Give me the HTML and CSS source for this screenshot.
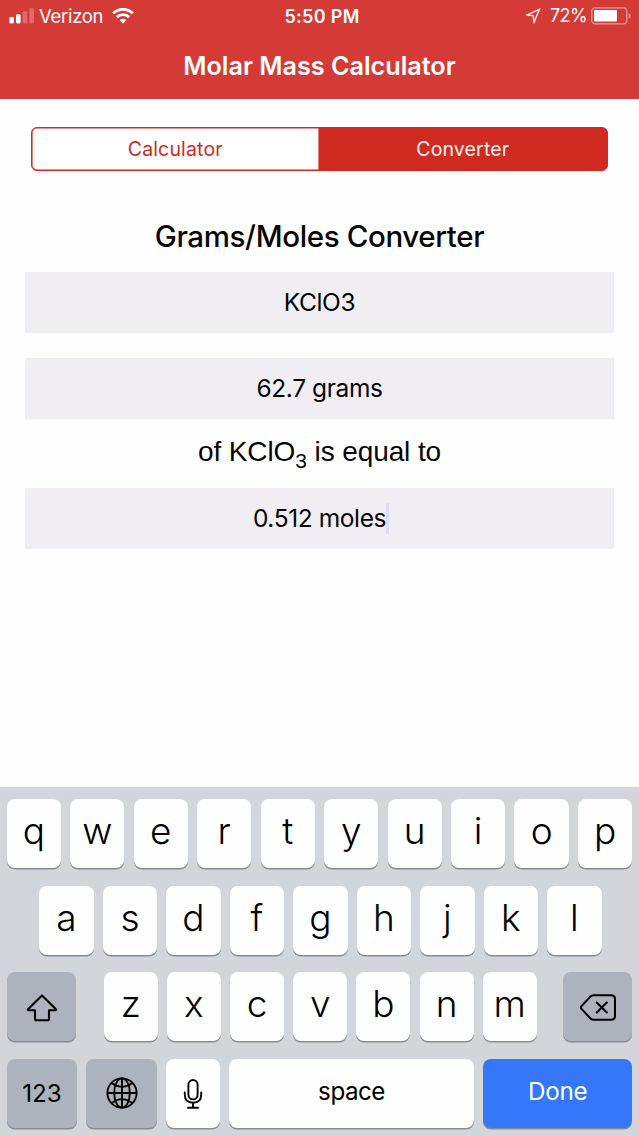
FILE: index.html
```html
<!DOCTYPE html>
<html lang="en">
<head>
    <meta charset="UTF-8"/>
    <meta content="width=device-width, initial-scale=1" name="viewport"/>
    <title>Molar Mass Calculator</title>
    <link rel="stylesheet" href="styles.css">
</head>
<body>

<header class="header">
    <div class="status-bar">
        <div class="status-left">
            <svg class="signal" width="26" height="16" viewBox="0 0 26 16" fill="#fff">
                <rect x="0.3" y="9" width="4.6" height="6.4" rx="1.4"/>
                <rect x="7" y="6.2" width="4.6" height="9.2" rx="1.4"/>
                <rect x="13.7" y="3.3" width="4.6" height="12.1" rx="1.4" opacity="0.25"/>
                <rect x="20.4" y="0.3" width="4.6" height="15.1" rx="1.4" opacity="0.25"/>
            </svg>
            <span class="carrier">Verizon</span>
            <svg class="wifi" width="22" height="16" viewBox="0 0 22 16" fill="none" stroke="#fff" stroke-width="2.9">
                <path d="M1.2 5.3a13.9 13.9 0 0 1 19.6 0"/>
                <path d="M4.9 9.1a8.7 8.7 0 0 1 12.2 0"/>
                <path d="M11 15.5L7.6 12.1a4.8 4.8 0 0 1 6.8 0z" fill="#fff" stroke="none"/>
            </svg>
        </div>
        <span class="time">5:50 PM</span>
        <div class="status-right">
            <svg class="location" width="16" height="16" viewBox="0 0 16 16" fill="none" stroke="#ffe3df" stroke-width="1.5">
                <path d="M14.4 1.4L1.4 7.2l6.6.4 1.2 6.4z"/>
            </svg>
            <span class="percent">72%</span>
            <svg class="battery" width="41" height="18" viewBox="0 0 41 18">
                <rect x="0.8" y="0.8" width="35" height="16" rx="3.2" fill="none" stroke="#ee9f99" stroke-width="1.2"/>
                <rect x="3" y="3" width="23" height="11.6" rx="1" fill="#fff"/>
                <path d="M37.6 6.2q2 .8 2 2.7t-2 2.7z" fill="#ee9f99"/>
            </svg>
        </div>
    </div>
    <h1 class="title">Molar Mass Calculator</h1>
</header>

<main class="content">
    <div class="segments">
        <button class="segment" type="button">Calculator</button>
        <button class="segment active" type="button">Converter</button>
    </div>
    <h2 class="heading">Grams/Moles Converter</h2>
    <div class="field formula">KClO3</div>
    <div class="field grams">62.7 grams</div>
    <p class="equal">of KClO<span class="sub">3</span> is equal to</p>
    <div class="field moles">0.512 moles<span class="caret"></span></div>
</main>

<div class="keyboard">
    <div class="row">
        <div class="key">q</div>
        <div class="key">w</div>
        <div class="key">e</div>
        <div class="key">r</div>
        <div class="key">t</div>
        <div class="key">y</div>
        <div class="key">u</div>
        <div class="key">i</div>
        <div class="key">o</div>
        <div class="key">p</div>
    </div>
    <div class="row row-middle">
        <div class="key">a</div>
        <div class="key">s</div>
        <div class="key">d</div>
        <div class="key">f</div>
        <div class="key">g</div>
        <div class="key">h</div>
        <div class="key">j</div>
        <div class="key">k</div>
        <div class="key">l</div>
    </div>
    <div class="row">
        <div class="key dark shift">
            <svg width="32" height="28" viewBox="0 0 32 28" fill="none" stroke="#000" stroke-width="2.1" stroke-linejoin="round">
                <path d="M16 1.6L30 15.2q.6 1-.5 1H23v8.6q0 1.5-1.5 1.5h-11Q9 26.3 9 24.8V16.2H2.5q-1.1 0-.5-1z"/>
            </svg>
        </div>
        <div class="key">z</div>
        <div class="key">x</div>
        <div class="key">c</div>
        <div class="key">v</div>
        <div class="key">b</div>
        <div class="key">n</div>
        <div class="key">m</div>
        <div class="key dark delete">
            <svg width="36" height="27" viewBox="0 0 36 27" fill="none" stroke="#000" stroke-width="2.1" stroke-linejoin="round" stroke-linecap="round">
                <path d="M13.5 1.2H31q4 0 4 4v16.6q0 4-4 4H13.5q-1.7 0-2.9-1.2L1.5 14.9q-1.2-1.4 0-2.8l9.1-9.7q1.2-1.2 2.9-1.2z"/>
                <path d="M16.8 8.5l10 10M26.8 8.5l-10 10"/>
            </svg>
        </div>
    </div>
    <div class="row">
        <div class="key dark wide numbers">123</div>
        <div class="key dark wide globe">
            <svg width="32" height="32" viewBox="0 0 32 32" fill="none" stroke="#000" stroke-width="1.9">
                <circle cx="16" cy="16" r="14.6"/>
                <ellipse cx="16" cy="16" rx="7.8" ry="14.6"/>
                <path d="M16 1.3v29.4M1.3 16h29.4M6 6.3Q16 13.5 26 6.3M6 25.7Q16 18.5 26 25.7"/>
            </svg>
        </div>
        <div class="key mic">
            <svg width="20" height="32" viewBox="0 0 20 32" fill="none" stroke="#000" stroke-width="1.9" stroke-linecap="round">
                <rect x="5.4" y="2" width="9.2" height="19.4" rx="4.6"/>
                <path d="M1.8 14.5v2.3q0 7.9 8.2 7.9t8.2-7.9v-2.3M10 24.7v5M5 29.8h10"/>
            </svg>
        </div>
        <div class="key space">space</div>
        <div class="key done">Done</div>
    </div>
</div>

</body>
</html>
```
FILE: styles.css
```css
* {
  box-sizing: border-box;
}
body {
  margin: 0;
  height: 1136px;
  display: flex;
  flex-direction: column;
  overflow: hidden;
  background: #fefefe;
  color: #050505;
  font-family: Inter, "Liberation Sans", sans-serif;
}
.header {
  height: 99px;
  background: #d43b36;
  color: #fff;
}
.status-bar {
  display: grid;
  grid-template-columns: 1fr auto 1fr;
  align-items: center;
  height: 32px;
  padding: 0 8px 0 9px;
  font-size: 18.5px;
  line-height: 32px;
}
.status-left,
.status-right {
  display: flex;
  align-items: center;
}
.status-left {
  margin-top: -1px;
}
.status-right {
  justify-content: flex-end;
  margin: -1px -1px 0 0;
}
.carrier {
  margin: 0 9px 0 4px;
  letter-spacing: -0.3px;
}
.time {
  font-weight: 600;
  font-size: 18px;
  letter-spacing: 0.3px;
  padding: 1px 0 0 4px;
}
.location {
  margin-right: 9px;
}
.percent {
  margin-right: 4px;
  font-size: 18px;
  letter-spacing: -0.6px;
}
.title {
  margin: 0;
  padding-top: 17px;
  text-align: center;
  font-size: 25.2px;
  font-weight: 600;
  line-height: 34px;
}
.content {
  flex: 1;
  padding: 28px 25px 0;
  text-align: center;
}
.segments {
  display: flex;
  height: 44px;
  margin: 0 6px;
  border: 1px solid #cf2b20;
  border-radius: 6px;
  overflow: hidden;
  background: #d12b21;
}
.segment {
  flex: 1;
  border: 0;
  padding: 0;
  background: #fff;
  color: #cf2b20;
  font-family: inherit;
  font-size: 19.5px;
  letter-spacing: 0.15px;
  border-radius: 5px 0 0 5px;
  box-shadow: inset 0 0 0 0.6px #cf2b20;
}
.segment.active {
  flex: 0 0 288.5px;
  padding: 0;
  border-radius: 0;
  background: #d12b21;
  color: #fff0ec;
}
.heading {
  margin: 44px 0 14px;
  font-size: 29.5px;
  font-weight: 500;
  letter-spacing: -0.37px;
  line-height: 43px;
}
.field {
  height: 61px;
  background: #f0eef3;
  font-size: 24.5px;
  letter-spacing: -0.4px;
  line-height: 61px;
}
.grams {
  margin-top: 25px;
}
.equal {
  margin: 0;
  height: 69px;
  font-family: "Liberation Sans", Arial, sans-serif;
  font-size: 28px;
  letter-spacing: -0.1px;
  line-height: 65px;
}
.sub {
  position: relative;
  top: 7px;
  font-size: 21px;
}
.caret {
  display: inline-block;
  width: 3px;
  height: 31px;
  margin: -4px -3px 0 0;
  background: #dcdcf2;
  vertical-align: middle;
}
.keyboard {
  display: flex;
  flex-direction: column;
  gap: 17.5px;
  height: 349px;
  padding: 12px 6.6px 0;
  background: #d2d5da;
}
.row {
  display: flex;
  gap: 9.1px;
  height: 69px;
}
.row-middle {
  padding: 0 30.8px 0 32.7px;
}
.key {
  flex: 1;
  display: flex;
  align-items: center;
  justify-content: center;
  border-radius: 8px;
  background: #fefefe;
  box-shadow: 0 1.5px 0 #898b8f;
  color: #000;
  font-size: 37px;
  font-weight: 350;
  line-height: 62px;
  padding-bottom: 5px;
}
.dark {
  background: #adb3bc;
}
.shift,
.delete {
  flex: none;
  width: 69.4px;
  padding: 2px 0 0;
}
.shift {
  padding-left: 2px;
  margin-right: 18.6px;
}
.delete {
  margin-left: 17.2px;
}
.wide {
  flex: none;
  width: 70.6px;
  padding-bottom: 0;
}
.mic {
  flex: none;
  width: 54.2px;
  padding: 1px 0 0;
}
.numbers,
.space,
.done {
  font-size: 24.2px;
  font-weight: 400;
}
.numbers {
  padding-top: 1px;
}
.space {
  padding-bottom: 3px;
  letter-spacing: -0.5px;
}
.done {
  flex: none;
  width: 149.5px;
  padding-bottom: 3px;
  background: #3478f9;
  color: #fff;
  letter-spacing: -0.3px;
}
```
